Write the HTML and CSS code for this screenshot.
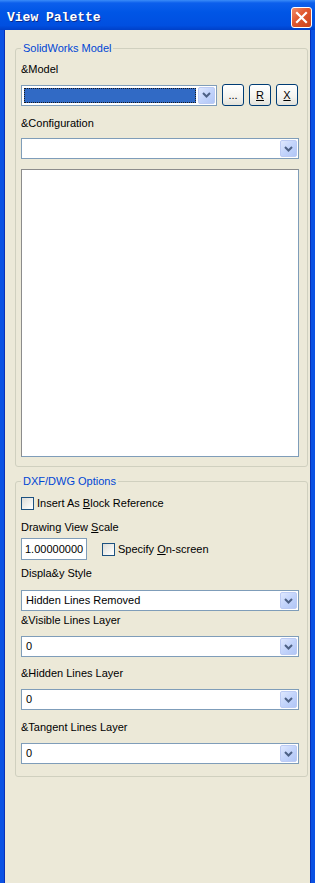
FILE: index.html
```html
<!DOCTYPE html>
<html lang="en">
<head>
  <meta charset="UTF-8">
  <meta name="viewport" content="width=device-width, initial-scale=1">
  <title>View Palette</title>
  <link rel="stylesheet" href="styles.css">
</head>
<body>
  <div class="window">
    <div class="titlebar">
      <span class="title">View Palette</span>
      <button class="close-btn" title="Close">
        <svg width="13" height="13" viewBox="0 0 13 13"><path d="M2 2 L11 11 M11 2 L2 11" stroke="#fff" stroke-width="2.2" stroke-linecap="square"/></svg>
      </button>
    </div>

    <div class="body">
      <fieldset class="group group-model">
        <legend>SolidWorks Model</legend>
        <div class="label lbl-model">&amp;Model</div>
        <div class="model-row">
          <div class="combo combo-model">
            <span class="combo-value"><span class="selected"></span></span>
            <span class="combo-arrow"><svg width="9" height="6" viewBox="0 0 9 6"><path d="M1 1 L4.5 4.5 L8 1" fill="none" stroke="#4d6185" stroke-width="2"/></svg></span>
          </div>
          <button class="btn">...</button>
          <button class="btn"><u>R</u></button>
          <button class="btn"><u>X</u></button>
        </div>
        <div class="label lbl-config">&amp;Configuration</div>
        <div class="combo combo-config">
          <span class="combo-value"></span>
          <span class="combo-arrow"><svg width="9" height="6" viewBox="0 0 9 6"><path d="M1 1 L4.5 4.5 L8 1" fill="none" stroke="#4d6185" stroke-width="2"/></svg></span>
        </div>
        <div class="listbox"></div>
      </fieldset>

      <fieldset class="group group-dxf">
        <legend>DXF/DWG Options</legend>
        <label class="check check-block"><span class="box"></span><span>Insert As <u>B</u>lock Reference</span></label>
        <div class="label lbl-scale">Drawing View <u>S</u>cale</div>
        <div class="scale-row">
          <div class="textbox">1.00000000</div>
          <label class="check"><span class="box"></span><span>Specify <u>O</u>n-screen</span></label>
        </div>
        <div class="label lbl-style">Displa&amp;y Style</div>
        <div class="combo combo-style">
          <span class="combo-value">Hidden Lines Removed</span>
          <span class="combo-arrow"><svg width="9" height="6" viewBox="0 0 9 6"><path d="M1 1 L4.5 4.5 L8 1" fill="none" stroke="#4d6185" stroke-width="2"/></svg></span>
        </div>
        <div class="label lbl-visible">&amp;Visible Lines Layer</div>
        <div class="combo combo-layer">
          <span class="combo-value">0</span>
          <span class="combo-arrow"><svg width="9" height="6" viewBox="0 0 9 6"><path d="M1 1 L4.5 4.5 L8 1" fill="none" stroke="#4d6185" stroke-width="2"/></svg></span>
        </div>
        <div class="label lbl-layer">&amp;Hidden Lines Layer</div>
        <div class="combo combo-layer">
          <span class="combo-value">0</span>
          <span class="combo-arrow"><svg width="9" height="6" viewBox="0 0 9 6"><path d="M1 1 L4.5 4.5 L8 1" fill="none" stroke="#4d6185" stroke-width="2"/></svg></span>
        </div>
        <div class="label lbl-tangent">&amp;Tangent Lines Layer</div>
        <div class="combo combo-layer">
          <span class="combo-value">0</span>
          <span class="combo-arrow"><svg width="9" height="6" viewBox="0 0 9 6"><path d="M1 1 L4.5 4.5 L8 1" fill="none" stroke="#4d6185" stroke-width="2"/></svg></span>
        </div>
      </fieldset>
    </div>
  </div>
</body>
</html>
```

FILE: styles.css
```css
* {
  box-sizing: border-box;
}
body {
  margin: 0;
  background-color: #ece9d8;
  font-family: "Liberation Sans", Arial, sans-serif;
  font-size: 11px;
  line-height: 13px;
  color: #000;
}
.window {
  width: 315px;
  height: 883px;
  display: flex;
  flex-direction: column;
  background-color: #ece9d8;
}

/* title bar */
.titlebar {
  height: 30px;
  flex-shrink: 0;
  display: flex;
  align-items: center;
  justify-content: space-between;
  padding: 5px 3px 0 7px;
  background: linear-gradient(to bottom, #3a8cf8 0, #0c5fec 3px, #0056e6 40%, #004fe0 85%, #0040c8 100%);
}
.title {
  font-family: "Liberation Mono", monospace;
  font-weight: bold;
  font-size: 13px;
  color: #fff;
  text-shadow: 1px 1px 0 #0a2b8c;
}
.close-btn {
  width: 21px;
  height: 21px;
  padding: 0;
  border: 1px solid #fff;
  border-radius: 3px;
  background: linear-gradient(135deg, #f08d6b 0%, #e0572e 45%, #c9431c 100%);
  display: flex;
  align-items: center;
  justify-content: center;
}

/* window body */
.body {
  flex: 1;
  border-left: 4px solid #0b52e4;
  border-right: 4px solid #0b52e4;
  box-shadow: inset 1px 0 0 #0831b8, inset -1px 0 0 #0831b8;
  padding: 0 3px 0 11px;
}
.group {
  margin: 0;
  min-width: 0;
  border: 1px solid #d0d0bf;
  border-radius: 3px;
  padding: 0 8px 9px 5px;
}
.group legend {
  padding: 0 2px;
  color: #0046d5;
  line-height: 13px;
}
.group-model {
  margin-top: 12px;
}
.group-dxf {
  margin-top: 8px;
  padding-bottom: 12px;
}
.label {
  height: 13px;
  white-space: nowrap;
}
.lbl-model { margin-top: 8px; }
.lbl-config { margin-top: 11px; }
.lbl-scale { margin-top: 11px; }
.lbl-style { margin-top: 7px; }
.lbl-visible { margin-top: 3px; }
.lbl-layer { margin-top: 10px; }
.lbl-tangent { margin-top: 11px; }

/* combo boxes */
.combo {
  height: 21px;
  display: flex;
  align-items: stretch;
  background: #fff;
  border: 1px solid #7f9db9;
  padding: 1px;
}
.combo-value {
  flex: 1;
  display: flex;
  align-items: center;
  padding-left: 3px;
  white-space: nowrap;
}
.combo-arrow {
  width: 17px;
  display: flex;
  align-items: center;
  justify-content: center;
  border: 1px solid #bccbf4;
  border-radius: 2px;
  background: linear-gradient(135deg, #dfe8fe 0%, #c3d4fb 50%, #b1c6f6 100%);
}
.combo-config { margin-top: 8px; }
.combo-style { margin-top: 10px; }
.combo-layer { margin-top: 9px; }

.model-row {
  margin-top: 8px;
  height: 22px;
  display: flex;
  align-items: center;
  gap: 5px;
}
.combo-model {
  width: 196px;
}
.combo-model .combo-value {
  padding: 1px 2px 1px 1px;
}
.selected {
  display: block;
  width: 100%;
  height: 100%;
  background: #316ac5;
  border: 1px dotted #1a1a1a;
}
.btn {
  width: 22px;
  height: 22px;
  padding: 0;
  border: 1px solid #003c74;
  border-radius: 3px;
  background: linear-gradient(to bottom, #fff 0%, #f4f3ee 60%, #e3e2da 100%);
  font-family: "Liberation Sans", Arial, sans-serif;
  font-size: 11px;
  color: #000;
  line-height: 13px;
}

.listbox {
  margin-top: 10px;
  height: 288px;
  background: #fff;
  border: 1px solid #7f9db9;
  border-top-color: #8c8c8c;
  border-left-color: #8c8c8c;
}

/* dxf options */
.check {
  display: flex;
  align-items: center;
  gap: 3px;
  height: 13px;
  white-space: nowrap;
}
.box {
  width: 13px;
  height: 13px;
  flex-shrink: 0;
  border: 1px solid #1c5180;
  background: linear-gradient(135deg, #dcdcd7 0%, #f6f6f4 70%, #fff 100%);
}
.check-block {
  margin-top: 9px;
}
.scale-row {
  margin-top: 4px;
  height: 22px;
  display: flex;
  align-items: center;
  gap: 15px;
}
.textbox {
  width: 66px;
  height: 22px;
  display: flex;
  align-items: center;
  padding-left: 3px;
  background: #fff;
  border: 1px solid #7f9db9;
}
```
